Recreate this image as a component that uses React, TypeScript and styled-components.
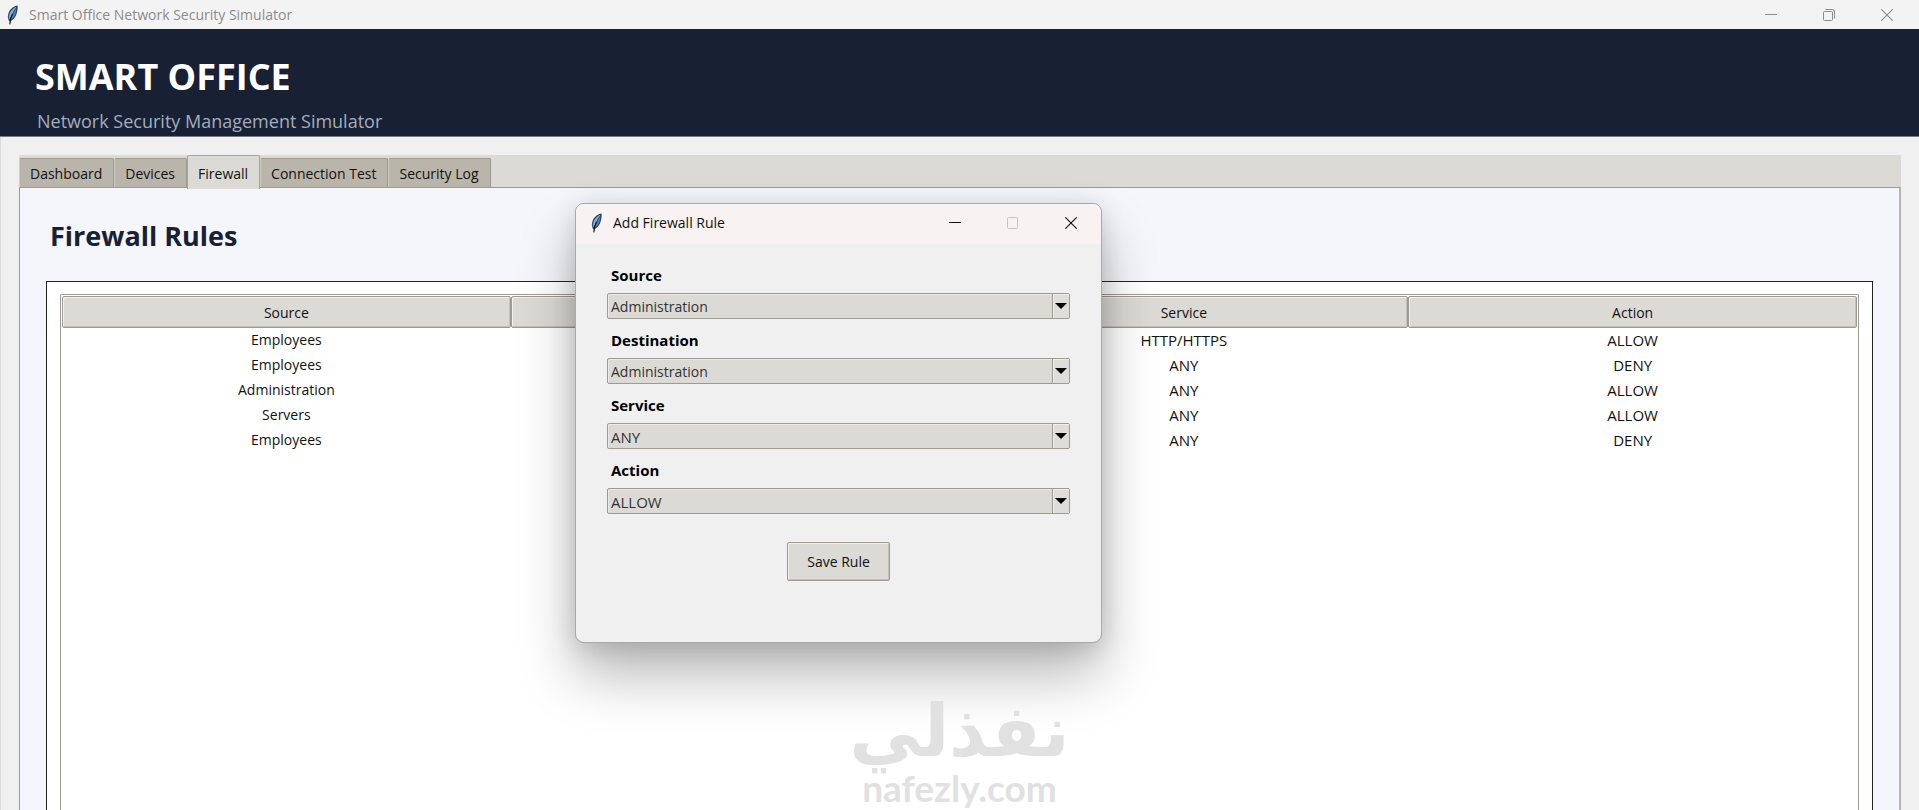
import React from "react";
import styled, { createGlobalStyle, css } from "styled-components";

const GlobalStyle = createGlobalStyle`
  * { box-sizing: border-box; }
  body {
    margin: 0;
    font-family: "Open Sans", "Noto Sans", sans-serif;
    font-size: 14px;
    color: #111;
    background: #f0f0f0;
  }
  button, select { font: inherit; color: inherit; }
`;

const Page = styled.div`
  position: relative;
  display: flex;
  flex-direction: column;
  height: 100vh;
  overflow: hidden;
`;

const TitleBar = styled.header<{ $dialog?: boolean }>`
  display: flex;
  align-items: center;
  flex: none;
  height: ${(p) => (p.$dialog ? 40 : 29)}px;
  padding: ${(p) => (p.$dialog ? "0 1px 2px 14px" : "0 3px 0 6px")};
  gap: 10px;
  background: ${(p) => (p.$dialog ? "#f8f3f2" : "#f3f3f3")};
  color: ${(p) => (p.$dialog ? "#111" : "#8b8b8b")};
  font-size: 14px;
  line-height: 20px;
`;

const WindowTitle = styled.span`
  flex: 1;
`;

const WindowButtons = styled.div`
  display: flex;
  align-self: stretch;
`;

const WindowButton = styled.button`
  display: flex;
  align-items: center;
  justify-content: center;
  width: 58px;
  padding: 0;
  border: 0;
  background: none;
  &:disabled { color: #c9c4c3; }
`;

const Banner = styled.div`
  flex: none;
  height: 108px;
  padding: 22px 35px 0;
  background: #182034;
  border-bottom: 1px solid #77797f;
`;

const BannerTitle = styled.h1`
  margin: 0;
  color: #fff;
  font-size: 36px;
  line-height: 52px;
  font-weight: 700;
`;

const BannerSubtitle = styled.p`
  margin: 4px 0 0 2px;
  color: #a3adbd;
  font-size: 18px;
  line-height: 28px;
`;

const Body = styled.div`
  display: flex;
  flex: 1;
  min-height: 0;
  padding: 18px 18px 0;
  border-left: 1px solid #dcdcdc;
`;

const Notebook = styled.main`
  display: flex;
  flex-direction: column;
  flex: 1;
`;

const TabBar = styled.nav`
  display: flex;
  align-items: flex-end;
  flex: none;
  height: 32px;
  background: #dcdad5;
`;

const Tab = styled.button<{ $active?: boolean }>`
  height: 29px;
  padding: 2px 11px 0 10px;
  border: 1px solid #9e9a91;
  border-left-color: #cfcbc2;
  border-bottom: 0;
  border-radius: 2px 2px 0 0;
  background: #bab5ab;
  line-height: 20px;
  white-space: nowrap;
  ${(p) =>
    p.$active &&
    css`
      z-index: 1;
      height: 34px;
      margin-bottom: -2px;
      border-color: #a8a49b;
      background: #dcdad5;
    `}
`;

const Panel = styled.section`
  display: flex;
  flex-direction: column;
  flex: 1;
  min-height: 0;
  padding: 28px 26px 0;
  border: 1px solid #9e9a91;
  border-right: 2px solid #b9b6ae;
  border-bottom: 0;
  background: #f4f6fb;
`;

const Heading = styled.h2`
  margin: 0 0 25px 4px;
  color: #182034;
  font-size: 27px;
  line-height: 40px;
  font-weight: 700;
`;

const Card = styled.div`
  display: flex;
  flex: 1;
  min-height: 0;
  padding: 12px 13px 0;
  border: 1px solid #222;
  border-bottom: 0;
  background: #fff;
`;

const Tree = styled.div`
  flex: 1;
  padding: 1px 1px 0;
  border: 1px solid #9e9a91;
  border-bottom: 0;
  border-radius: 2px 2px 0 0;
`;

const Table = styled.table`
  width: 100%;
  border-collapse: separate;
  border-spacing: 0;
  table-layout: fixed;
`;

const HeadCell = styled.th`
  height: 32px;
  padding: 0;
  border: 1px solid #9e9a91;
  border-radius: 2px;
  background: #dcdad5;
  box-shadow: inset 1px 1px #f2f1ee, inset -1px -1px #c3c0b8;
  font-weight: 400;
`;

const Cell = styled.td<{ $keyword: boolean }>`
  height: 25px;
  padding: 0 0 2px;
  font-size: ${(p) => (p.$keyword ? 15 : 14)}px;
  line-height: 20px;
  text-align: center;
`;

const Dialog = styled.section`
  position: absolute;
  z-index: 2;
  left: 575px;
  top: 203px;
  width: 527px;
  height: 440px;
  overflow: hidden;
  border: 1px solid #a9a9a9;
  border-radius: 9px;
  background: #f0f0f0;
`;

const DialogShadow = styled(Dialog)`
  z-index: 1;
  box-shadow: 0 32px 56px rgba(0, 0, 0, 0.28), 0 4px 24px rgba(0, 0, 0, 0.14);
`;

const Form = styled.form`
  display: flex;
  flex-direction: column;
  padding: 18px 31px 0;
`;

const Field = styled.div`
  display: flex;
  flex-direction: column;
  height: 65px;
`;

const Label = styled.label`
  padding-left: 4px;
  color: #000;
  font-size: 15px;
  line-height: 26px;
  margin-bottom: 5px;
  font-weight: 700;
`;

const SelectBox = styled.div`
  position: relative;
  display: flex;
`;

const Select = styled.select<{ $keyword: boolean }>`
  flex: 1;
  height: 26px;
  padding: 1px 20px 0 3px;
  appearance: none;
  border: 1px solid #9e9a91;
  border-radius: 2px;
  background: #dcdad5;
  box-shadow: inset 1px 1px #ebe9e5;
  color: #333;
  font-size: ${(p) => (p.$keyword ? 15 : 14)}px;
  line-height: 20px;
`;

const SelectArrow = styled.span`
  position: absolute;
  top: 1px;
  right: 1px;
  bottom: 1px;
  display: flex;
  align-items: center;
  justify-content: center;
  width: 17px;
  border-left: 1px solid #9e9a91;
  background: #dfddd8;
  box-shadow: inset 1px 1px #efeeeb;
  pointer-events: none;
`;

const SaveButton = styled.button`
  align-self: center;
  width: 103px;
  height: 39px;
  margin-top: 20px;
  padding: 0;
  border: 1px solid #9e9a91;
  border-radius: 2px;
  background: #dcdad5;
  box-shadow: inset 1px 1px #efeeeb, inset -1px -1px #c3c0b8;
`;

const Watermark = styled.div`
  position: absolute;
  z-index: 3;
  left: 0;
  right: 0;
  bottom: 0;
  display: flex;
  flex-direction: column;
  align-items: center;
  color: #e1e1e1;
  font-weight: 700;
  pointer-events: none;
`;

const WatermarkArabic = styled.span`
  margin-bottom: -8px;
  font-family: "DejaVu Sans", sans-serif;
  font-size: 72px;
  line-height: 84px;
`;

const WatermarkLatin = styled.span`
  font-family: Lato, sans-serif;
  font-size: 37px;
  line-height: 45px;
`;

const Feather = () => (
  <svg width="13" height="20" viewBox="0 0 13 20" aria-hidden="true">
    <path d="M11.4 0.6C8.2 0.8 4.2 4 2.4 8.6C1.4 11.4 1.8 14.6 3.6 16.4C6.6 15.6 9.6 12.4 10.6 8.6C11.4 5.6 12 2.6 11.4 0.6Z" fill="#22364f" />
    <path d="M10.6 1.4C7.4 2.6 4.2 6 3 10C2.6 12 2.6 13.4 3.2 14.4C5.4 10.4 7.6 6 10.6 1.4Z" fill="#7db0e2" />
    <path d="M10.6 2.8C8.4 6.4 6.2 11 4.6 14.8C7.2 13.4 8.9 11 9.7 8Z" fill="#4f86c0" />
    <path d="M6.4 9C5 12 4 15 3.8 19.4" fill="none" stroke="#161c24" strokeWidth="1.2" />
  </svg>
);

const MinimizeIcon = () => (
  <svg width="12" height="12" viewBox="0 0 12 12" aria-hidden="true">
    <path d="M0 5.5H12" stroke="currentColor" />
  </svg>
);

const RestoreIcon = () => (
  <svg width="12" height="12" viewBox="0 0 12 12" fill="none" stroke="currentColor" aria-hidden="true">
    <rect x="0.5" y="2.5" width="9" height="9" rx="1" />
    <path d="M2.5 0.5H9Q11.5 0.5 11.5 3V9.5" />
  </svg>
);

const MaximizeIcon = () => (
  <svg width="12" height="12" viewBox="0 0 12 12" fill="none" stroke="currentColor" aria-hidden="true">
    <rect x="0.5" y="0.5" width="10" height="11" rx="1" />
  </svg>
);

const CloseIcon = () => (
  <svg width="12" height="12" viewBox="0 0 12 12" aria-hidden="true">
    <path d="M0.3 0.3L11.7 11.7M11.7 0.3L0.3 11.7" stroke="currentColor" strokeWidth="1.1" />
  </svg>
);

const tabs = ["Dashboard", "Devices", "Firewall", "Connection Test", "Security Log"];

const columns = ["Source", "Destination", "Service", "Action"];

const rules = [
  ["Employees", "Servers", "HTTP/HTTPS", "ALLOW"],
  ["Employees", "Administration", "ANY", "DENY"],
  ["Administration", "Servers", "ANY", "ALLOW"],
  ["Servers", "Employees", "ANY", "ALLOW"],
  ["Employees", "Employees", "ANY", "DENY"],
];

const fields = [
  { id: "source", label: "Source", keyword: false, options: ["Administration", "Employees", "Servers"] },
  { id: "destination", label: "Destination", keyword: false, options: ["Administration", "Employees", "Servers"] },
  { id: "service", label: "Service", keyword: true, options: ["ANY", "HTTP/HTTPS"] },
  { id: "action", label: "Action", keyword: true, options: ["ALLOW", "DENY"] },
];

export default function App() {
  return (
    <Page>
      <GlobalStyle />
      <TitleBar>
        <Feather />
        <WindowTitle>Smart Office Network Security Simulator</WindowTitle>
        <WindowButtons>
          <WindowButton aria-label="Minimize"><MinimizeIcon /></WindowButton>
          <WindowButton aria-label="Restore"><RestoreIcon /></WindowButton>
          <WindowButton aria-label="Close"><CloseIcon /></WindowButton>
        </WindowButtons>
      </TitleBar>
      <Banner>
        <BannerTitle>SMART OFFICE</BannerTitle>
        <BannerSubtitle>Network Security Management Simulator</BannerSubtitle>
      </Banner>
      <Body>
        <Notebook>
          <TabBar>
            {tabs.map((tab) => (
              <Tab key={tab} $active={tab === "Firewall"}>{tab}</Tab>
            ))}
          </TabBar>
          <Panel>
            <Heading>Firewall Rules</Heading>
            <Card>
              <Tree>
                <Table>
                  <thead>
                    <tr>
                      {columns.map((column) => (
                        <HeadCell key={column}>{column}</HeadCell>
                      ))}
                    </tr>
                  </thead>
                  <tbody>
                    {rules.map((rule, row) => (
                      <tr key={row}>
                        {rule.map((value, col) => (
                          <Cell key={col} $keyword={col > 1}>{value}</Cell>
                        ))}
                      </tr>
                    ))}
                  </tbody>
                </Table>
              </Tree>
            </Card>
          </Panel>
        </Notebook>
      </Body>
      <DialogShadow as="div" aria-hidden="true" />
      <Dialog role="dialog" aria-label="Add Firewall Rule">
        <TitleBar $dialog>
          <Feather />
          <WindowTitle>Add Firewall Rule</WindowTitle>
          <WindowButtons>
            <WindowButton aria-label="Minimize"><MinimizeIcon /></WindowButton>
            <WindowButton aria-label="Maximize" disabled><MaximizeIcon /></WindowButton>
            <WindowButton aria-label="Close"><CloseIcon /></WindowButton>
          </WindowButtons>
        </TitleBar>
        <Form onSubmit={(event) => event.preventDefault()}>
          {fields.map((field) => (
            <Field key={field.id}>
              <Label htmlFor={field.id}>{field.label}</Label>
              <SelectBox>
                <Select id={field.id} $keyword={field.keyword}>
                  {field.options.map((option) => (
                    <option key={option}>{option}</option>
                  ))}
                </Select>
                <SelectArrow>
                  <svg width="12" height="6" viewBox="0 0 12 6" aria-hidden="true">
                    <path d="M0 0H12L6 6Z" fill="#000" />
                  </svg>
                </SelectArrow>
              </SelectBox>
            </Field>
          ))}
          <SaveButton>Save Rule</SaveButton>
        </Form>
      </Dialog>
      <Watermark>
        <WatermarkArabic lang="ar" dir="rtl">نفذلي</WatermarkArabic>
        <WatermarkLatin>nafezly.com</WatermarkLatin>
      </Watermark>
    </Page>
  );
}
